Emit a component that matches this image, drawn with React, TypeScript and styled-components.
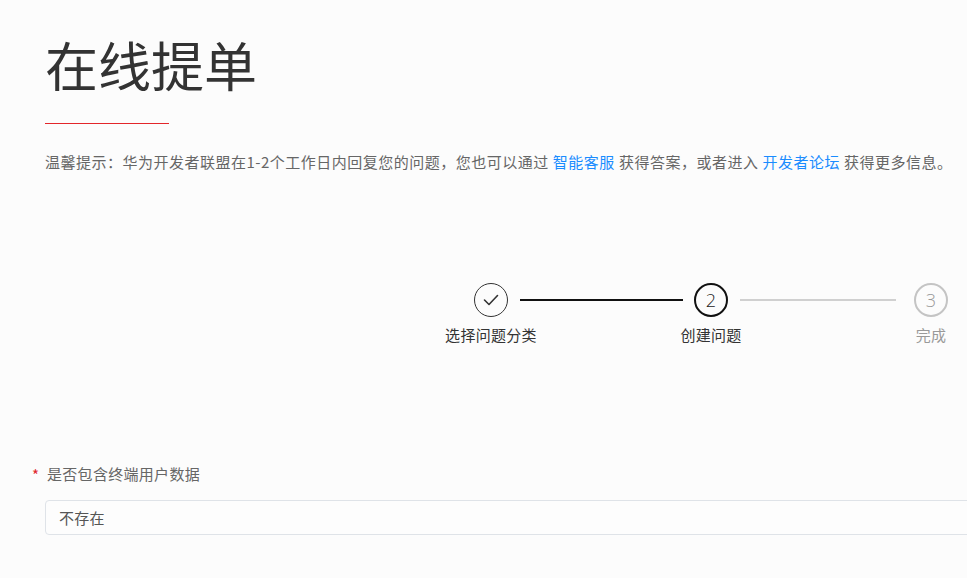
import styled, { createGlobalStyle } from "styled-components";

const GlobalStyle = createGlobalStyle`
  html, body {
    margin: 0;
    padding: 0;
    background: #fcfcfc;
    overflow: hidden;
  }
  body {
    font-family: "Noto Sans CJK SC", "Noto Sans", sans-serif;
    color: #333;
  }
`;

const Page = styled.div`
  width: 1200px;
  padding: 0 0 0 45px;
  box-sizing: border-box;
`;

const Title = styled.h1`
  margin: 0;
  padding-top: 27px;
  font-size: 53px;
  font-weight: 400;
  line-height: 74px;
  color: #333;
`;

const RedLine = styled.div`
  width: 124px;
  height: 1px;
  background: #e3262a;
  margin-top: 22px;
`;

const Hint = styled.p`
  margin: 27px 0 0;
  font-size: 15px;
  letter-spacing: 0.5px;
  line-height: 22px;
  color: #666;
  white-space: nowrap;
`;

const Link = styled.a`
  color: #1a8cff;
  text-decoration: none;
  margin: 0 4px;
`;

const Steps = styled.div`
  display: flex;
  align-items: flex-start;
  margin: 110px 0 0 429px;
`;

const Step = styled.div`
  width: 34px;
  display: flex;
  flex-direction: column;
  align-items: center;
`;

const Circle = styled.div<{ $state: "done" | "active" | "wait" }>`
  width: 34px;
  height: 34px;
  box-sizing: border-box;
  border-radius: 50%;
  border: ${(p) =>
    p.$state === "done"
      ? "1.5px solid #333"
      : p.$state === "active"
      ? "2px solid #111"
      : "2px solid #c4c4c4"};
  color: ${(p) => (p.$state === "wait" ? "#999" : "#222")};
  display: flex;
  align-items: center;
  justify-content: center;
  font-size: 18px;
  font-family: "Open Sans", "Liberation Sans", sans-serif;
  font-weight: 300;
`;

const StepLabel = styled.div<{ $muted?: boolean }>`
  margin-top: 8px;
  font-size: 15px;
  letter-spacing: 0.3px;
  line-height: 20px;
  white-space: nowrap;
  color: ${(p) => (p.$muted ? "#999" : "#333")};
`;

const Connector = styled.div<{ $done?: boolean; $w: number; $after: number }>`
  flex: none;
  width: ${(p) => p.$w}px;
  height: 2px;
  margin: 16px ${(p) => p.$after}px 0 12px;
  background: ${(p) => (p.$done ? "#111" : "#d0d0d0")};
`;

const Field = styled.div`
  margin-top: 119px;
`;

const Label = styled.div`
  position: relative;
  font-size: 15px;
  letter-spacing: 0.3px;
  line-height: 20px;
  color: #666;
  padding-left: 2px;
`;

const Star = styled.span`
  position: absolute;
  left: -13px;
  top: 1px;
  color: #e0262b;
`;

const Input = styled.div`
  margin-top: 16px;
  width: 1100px;
  height: 35px;
  box-sizing: border-box;
  border: 1px solid #dfe3e8;
  border-radius: 4px;
  background: #fdfdfd;
  padding: 0 13px;
  display: flex;
  align-items: center;
  font-size: 15px;
  letter-spacing: 0.3px;
  color: #555;
`;

export default function App() {
  return (
    <>
      <GlobalStyle />
      <Page>
        <Title>在线提单</Title>
        <RedLine />
        <Hint>
          温馨提示：华为开发者联盟在1-2个工作日内回复您的问题，您也可以通过
          <Link>智能客服</Link>获得答案，或者进入<Link>开发者论坛</Link>获得更多信息。
        </Hint>
        <Steps>
          <Step>
            <Circle $state="done">
              <svg width="16" height="12" viewBox="0 0 16 12" fill="none">
                <path d="M1.5 6l4.5 4.5L14.5 1.5" stroke="#333" strokeWidth="1.6" strokeLinecap="round" strokeLinejoin="round" />
              </svg>
            </Circle>
            <StepLabel>选择问题分类</StepLabel>
          </Step>
          <Connector $done $w={163} $after={11} />
          <Step>
            <Circle $state="active">2</Circle>
            <StepLabel>创建问题</StepLabel>
          </Step>
          <Connector $w={156} $after={18} />
          <Step>
            <Circle $state="wait">3</Circle>
            <StepLabel $muted>完成</StepLabel>
          </Step>
        </Steps>
        <Field>
          <Label>
            <Star>*</Star>是否包含终端用户数据
          </Label>
          <Input>不存在</Input>
        </Field>
      </Page>
    </>
  );
}
